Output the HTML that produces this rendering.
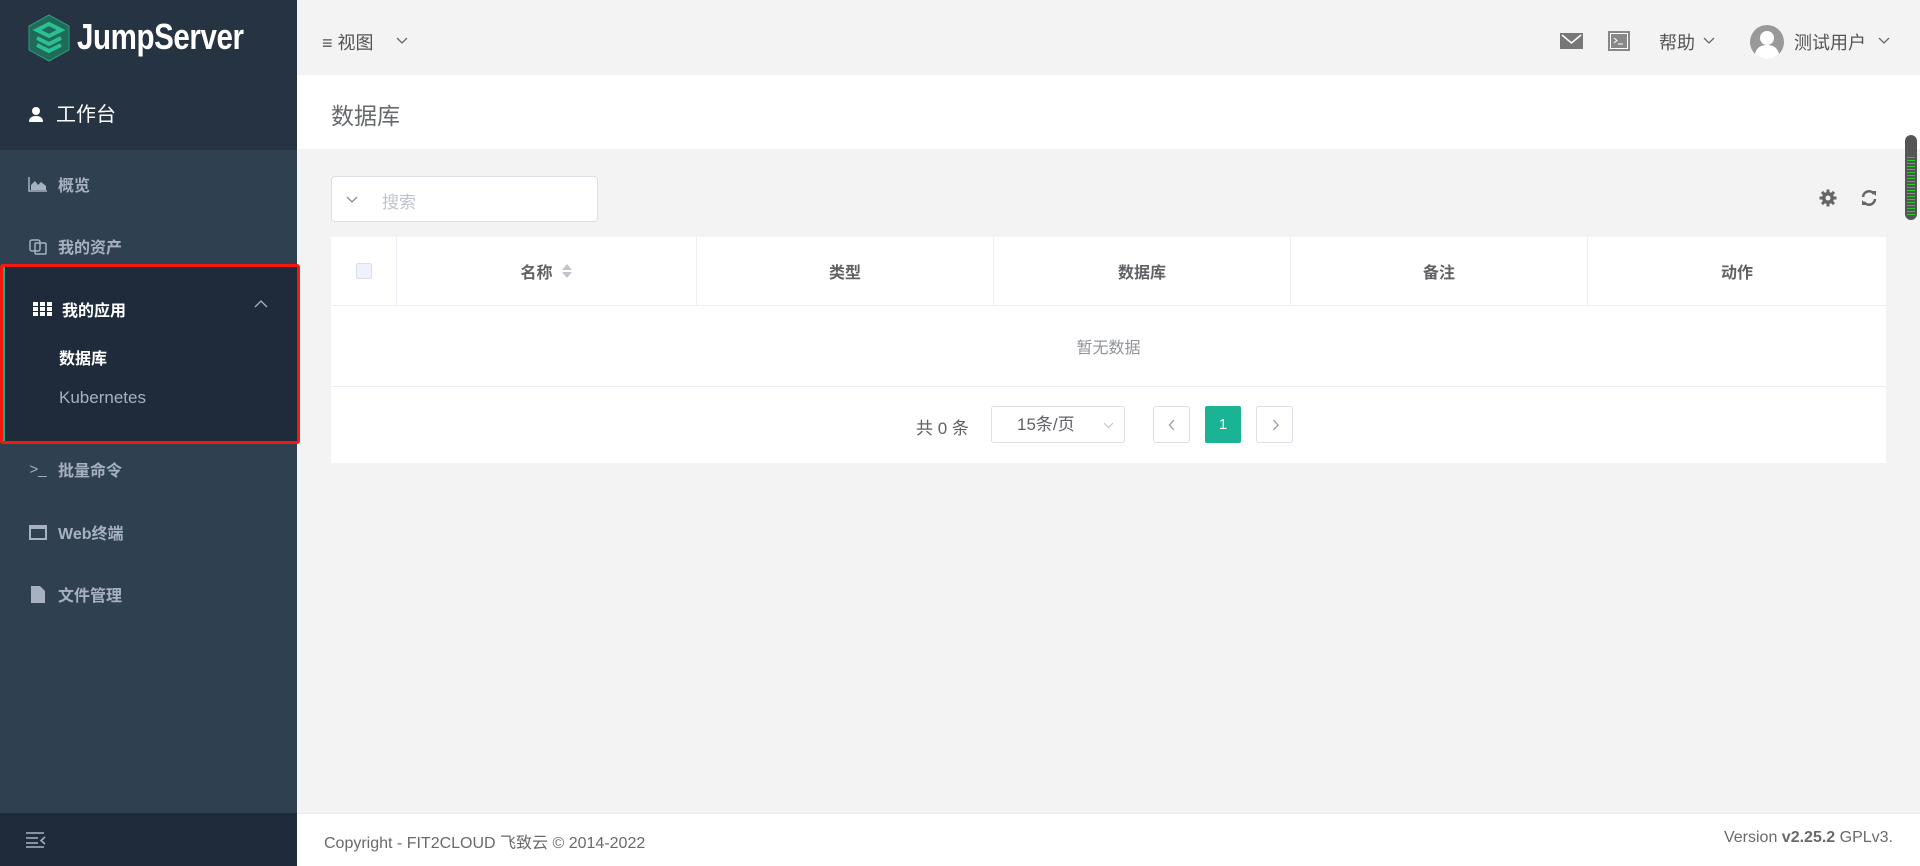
<!DOCTYPE html>
<html><head><meta charset="utf-8"><style>
*{box-sizing:border-box;margin:0;padding:0}
body{width:1920px;height:866px;overflow:hidden;background:#f3f3f4;font-family:"Liberation Sans","Noto Sans CJK SC",sans-serif;position:relative;color:#676a6c}
.sb{position:absolute;left:0;top:0;width:297px;height:866px;background:#2f4050}
.logo{position:absolute;left:0;top:0;width:297px;height:150px;background:#263343}
.logo .t{position:absolute;left:77px;top:16px;color:#fff;font-size:36px;font-weight:bold;transform:scaleX(0.82);transform-origin:left center;letter-spacing:-0.5px}
.logo .u{position:absolute;left:28px;top:98px;color:#fff;font-size:20px}
.mi{position:absolute;left:28px;color:#a7b1c2;font-size:16px;font-weight:bold;display:flex;align-items:center}
.mi .ic{width:20px;margin-right:10px;display:inline-flex;justify-content:center}
.sel{position:absolute;left:2px;top:266px;width:295px;height:176px;background:#1f2a3a;border-left:3px solid #19aa8d}
.red{position:absolute;left:0;top:264px;width:300px;height:180px;border:3px solid #f5180f;border-radius:3px}
.sbf{position:absolute;left:0;top:813px;width:297px;height:53px;background:#1f2a3a}
.top{position:absolute;left:297px;top:0;right:0;height:75px;background:#f3f3f4}
.title{position:absolute;left:297px;top:75px;right:0;height:74px;background:#fff}
.foot{position:absolute;left:297px;top:813px;right:0;height:53px;background:#fff;border-top:1px solid #e7eaec;font-size:16px;color:#676a6c}
.tbl{position:absolute;left:331px;top:237px;width:1555px;height:226px;background:#fff}
.th{position:absolute;top:0;height:68px;border-right:1px solid #ebeef5;display:flex;align-items:center;justify-content:center;font-weight:bold;font-size:16px;color:#606266}
.pg{position:absolute;border:1px solid #dcdfe6;border-radius:3px;background:#fff}
</style></head><body>
<div class="sb">
 <div class="logo">
  <svg style="position:absolute;left:28px;top:14px" width="42" height="48" viewBox="0 0 42 48"><polygon points="21,1 41,12 41,36 21,47 1,36 1,12" fill="#1f6b57" stroke="#2a9d7f"/><path d="M9 16 L21 10 L33 16 L21 22 Z M9 24 L21 30 L33 24 M9 31 L21 37 L33 31" fill="none" stroke="#2bbf96" stroke-width="4"/></svg>
  <div class="t">JumpServer</div>
  <div class="u"><svg width="16" height="16" viewBox="0 0 16 16" style="margin-right:12px;vertical-align:-1px"><circle cx="8" cy="5" r="4" fill="#fff"/><path d="M1 16 Q1 10 8 10 Q15 10 15 16Z" fill="#fff"/></svg>工作台</div>
 </div>
 <div class="mi" style="top:172px"><span class="ic"><svg width="20" height="16"><path d="M1 1V15H19" stroke="#a7b1c2" fill="none" stroke-width="1.5"/><path d="M3 14 L3 9 L7 5 L10 9 L13 6 L18 10 L18 14Z" fill="#a7b1c2"/></svg></span>概览</div>
 <div class="mi" style="top:234px"><span class="ic"><svg width="18" height="18"><rect x="1" y="3" width="10" height="11" rx="2" fill="none" stroke="#a7b1c2" stroke-width="1.5"/><rect x="6" y="6" width="11" height="11" rx="1" fill="none" stroke="#a7b1c2" stroke-width="1.5"/></svg></span>我的资产</div>
 <div class="sel"></div>
 <div class="red"></div>
 <div class="mi" style="top:297px;left:32px;color:#fff"><span class="ic"><svg width="19" height="14"><g fill="#fff"><rect x="0" y="0" width="5" height="4"/><rect x="7" y="0" width="5" height="4"/><rect x="14" y="0" width="5" height="4"/><rect x="0" y="5" width="5" height="4"/><rect x="7" y="5" width="5" height="4"/><rect x="14" y="5" width="5" height="4"/><rect x="0" y="10" width="5" height="4"/><rect x="7" y="10" width="5" height="4"/><rect x="14" y="10" width="5" height="4"/></g></svg></span>我的应用</div>
 <svg style="position:absolute;left:254px;top:299px" width="14" height="9"><path d="M1 8 L7 2 L13 8" stroke="#a7b1c2" fill="none" stroke-width="1.3"/></svg>
 <div class="mi" style="top:345px;left:59px;color:#fff">数据库</div>
 <div class="mi" style="top:388px;left:59px;font-weight:normal;font-size:17px">Kubernetes</div>
 <div class="mi" style="top:457px"><span class="ic" style="font-weight:normal;font-size:15px">&gt;_</span>批量命令</div>
 <div class="mi" style="top:520px"><span class="ic"><svg width="18" height="15"><rect x="1" y="1" width="16" height="13" fill="none" stroke="#a7b1c2" stroke-width="2"/><rect x="1" y="1" width="16" height="3" fill="#a7b1c2"/></svg></span>Web终端</div>
 <div class="mi" style="top:582px"><span class="ic"><svg width="14" height="17"><path d="M0 0H9L14 5V17H0Z" fill="#a7b1c2"/></svg></span>文件管理</div>
 <div class="sbf"><svg style="position:absolute;left:26px;top:19px" width="20" height="16"><path d="M0 1H18M0 6H12M0 11H12M0 15H18M19 5L15 8.5L19 12" stroke="#a7b1c2" fill="none" stroke-width="1.5"/></svg></div>
</div>
<div class="top">
 <div style="position:absolute;left:25px;top:29px;font-size:18px;color:#555">≡ 视图</div>
 <svg style="position:absolute;left:99px;top:37px" width="12" height="8"><path d="M1 1L6 6L11 1" stroke="#666" fill="none" stroke-width="1.3"/></svg>
 <svg style="position:absolute;left:1263px;top:33px" width="23" height="16"><rect width="23" height="16" fill="#777"/><path d="M2 2L11.5 10L21 2" stroke="#fff" fill="none" stroke-width="1.5"/></svg>
 <svg style="position:absolute;left:1311px;top:31px" width="22" height="20"><rect x="1" y="1" width="20" height="18" fill="#fff" stroke="#888" stroke-width="2"/><rect x="3" y="3" width="16" height="14" fill="#888"/><path d="M6 7L9 9.5L6 12M10 13H15" stroke="#fff" fill="none"/></svg>
 <div style="position:absolute;left:1362px;top:29px;font-size:18px;color:#555">帮助</div>
 <svg style="position:absolute;left:1406px;top:37px" width="12" height="8"><path d="M1 1L6 6L11 1" stroke="#666" fill="none" stroke-width="1.3"/></svg>
 <svg style="position:absolute;left:1453px;top:25px" width="34" height="34"><circle cx="17" cy="17" r="17" fill="#999"/><circle cx="17" cy="13" r="7" fill="#fff"/><path d="M5 29Q7 20 17 20Q27 20 29 29Q24 34 17 34Q10 34 5 29Z" fill="#fff"/></svg>
 <div style="position:absolute;left:1497px;top:29px;font-size:18px;color:#555">测试用户</div>
 <svg style="position:absolute;left:1581px;top:37px" width="12" height="8"><path d="M1 1L6 6L11 1" stroke="#666" fill="none" stroke-width="1.3"/></svg>
</div>
<div class="title"><div style="position:absolute;left:34px;top:22px;font-size:23px;color:#676a6c">数据库</div></div>
<div style="position:absolute;left:1905px;top:135px;width:12px;height:85px;border-radius:6px;background:#555;border:2px solid #555"><div style="position:absolute;left:0;right:0;top:18px;bottom:2px;background:repeating-linear-gradient(#555 0 2px,#2c2 2px 3px)"></div></div>
<div style="position:absolute;left:331px;top:176px;width:267px;height:46px;background:#fff;border:1px solid #dcdfe6;border-radius:4px">
 <svg style="position:absolute;left:14px;top:19px" width="12" height="8"><path d="M1 1L6 6L11 1" stroke="#888" fill="none" stroke-width="1.3"/></svg>
 <span style="position:absolute;left:50px;top:11px;font-size:17px;color:#c0c4cc">搜索</span></div>
<svg style="position:absolute;left:1819px;top:189px" width="18" height="18" viewBox="0 0 18 18"><g fill="#666"><circle cx="9" cy="9" r="6"/><rect x="7.5" y="0.5" width="3" height="17"/><rect x="0.5" y="7.5" width="17" height="3"/><rect x="7.5" y="0.5" width="3" height="17" transform="rotate(45 9 9)"/><rect x="7.5" y="0.5" width="3" height="17" transform="rotate(-45 9 9)"/></g><circle cx="9" cy="9" r="2.5" fill="#f3f3f4"/></svg>
<svg style="position:absolute;left:1860px;top:189px" width="18" height="18" viewBox="0 0 18 18"><path d="M3 8A6 6 0 0 1 14 5M15 10A6 6 0 0 1 4 13" stroke="#666" stroke-width="2.5" fill="none"/><path d="M11 2L16 2L16 7Z M2 11L7 16L2 16Z" fill="#666"/></svg>
<div class="tbl">
 <div class="th" style="left:0;width:66px"><div style="width:16px;height:16px;border:1px solid #dcdfe6;border-radius:2px;background:#edf2fc"></div></div>
 <div class="th" style="left:66px;width:300px">名称 <svg width="12" height="16" style="margin-left:8px"><path d="M6 1L11 7H1Z M1 9H11L6 15Z" fill="#c0c4cc"/></svg></div>
 <div class="th" style="left:366px;width:297px">类型</div>
 <div class="th" style="left:663px;width:297px">数据库</div>
 <div class="th" style="left:960px;width:297px">备注</div>
 <div class="th" style="left:1257px;width:298px;border-right:none">动作</div>
 <div style="position:absolute;left:0;top:68px;width:1555px;height:1px;background:#ebeef5"></div>
 <div style="position:absolute;left:0;top:69px;width:1555px;height:80px;display:flex;align-items:center;justify-content:center;font-size:16px;color:#909399">暂无数据</div>
 <div style="position:absolute;left:0;top:149px;width:1555px;height:1px;background:#ebeef5"></div>
 <div style="position:absolute;left:585px;top:177px;font-size:17px;color:#606266">共 0 条</div>
 <div class="pg" style="left:660px;top:169px;width:134px;height:37px"><span style="position:absolute;left:25px;top:7px;font-size:17px;color:#606266;line-height:22px">15条/页</span><svg style="position:absolute;right:10px;top:15px" width="11" height="7"><path d="M1 1L5.5 5.5L10 1" stroke="#c0c4cc" fill="none" stroke-width="1.2"/></svg></div>
 <div class="pg" style="left:822px;top:169px;width:37px;height:37px"><svg style="position:absolute;left:14px;top:12px" width="8" height="12"><path d="M6 1L1.5 6L6 11" stroke="#999" fill="none" stroke-width="1.3"/></svg></div>
 <div style="position:absolute;left:874px;top:169px;width:36px;height:37px;background:#1ab394;border-radius:2px;color:#fff;text-align:center;line-height:37px;font-size:15px">1</div>
 <div class="pg" style="left:925px;top:169px;width:37px;height:37px"><svg style="position:absolute;left:15px;top:12px" width="8" height="12"><path d="M1.5 1L6 6L1.5 11" stroke="#999" fill="none" stroke-width="1.3"/></svg></div>
</div>
<div class="foot"><span style="position:absolute;left:27px;top:15px">Copyright - FIT2CLOUD 飞致云 © 2014-2022</span><span style="position:absolute;right:27px;top:15px">Version <b>v2.25.2</b> GPLv3.</span></div>
</body></html>
